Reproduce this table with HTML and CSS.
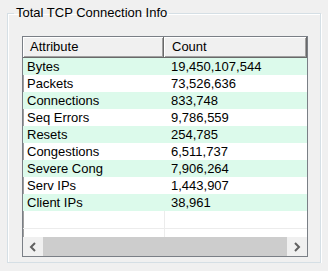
FILE: index.html
```html
<!DOCTYPE html>
<html>
<head>
<meta charset="utf-8">
<link rel="stylesheet" href="styles.css">
</head>
<body>
<fieldset class="group">
  <legend class="group-title">Total TCP Connection Info</legend>
  <div class="listview">
    <div class="lv-header">
      <div class="hcell col-a">Attribute</div>
      <div class="hcell col-b">Count</div>
    </div>
    <div class="lv-body">
      <div class="row alt"><div class="cell col-a">Bytes</div><div class="cell col-b">19,450,107,544</div></div>
      <div class="row"><div class="cell col-a">Packets</div><div class="cell col-b">73,526,636</div></div>
      <div class="row alt"><div class="cell col-a">Connections</div><div class="cell col-b">833,748</div></div>
      <div class="row"><div class="cell col-a">Seq Errors</div><div class="cell col-b">9,786,559</div></div>
      <div class="row alt"><div class="cell col-a">Resets</div><div class="cell col-b">254,785</div></div>
      <div class="row"><div class="cell col-a">Congestions</div><div class="cell col-b">6,511,737</div></div>
      <div class="row alt"><div class="cell col-a">Severe Cong</div><div class="cell col-b">7,906,264</div></div>
      <div class="row"><div class="cell col-a">Serv IPs</div><div class="cell col-b">1,443,907</div></div>
      <div class="row alt"><div class="cell col-a">Client IPs</div><div class="cell col-b">38,961</div></div>
      <div class="filler">
        <div class="filler-row"><div class="fcell col-a"></div><div class="fcell col-b"></div></div>
        <div class="filler-rest"><div class="fcell col-a"></div><div class="fcell col-b"></div></div>
      </div>
    </div>
    <div class="hscroll">
      <div class="sb-btn">
        <svg width="8" height="10" viewBox="0 0 8 10"><path d="M6 1 L2 5 L6 9" fill="none" stroke="#606060" stroke-width="2"/></svg>
      </div>
      <div class="sb-track"><div class="sb-thumb"></div></div>
      <div class="sb-btn">
        <svg width="8" height="10" viewBox="0 0 8 10"><path d="M2 1 L6 5 L2 9" fill="none" stroke="#606060" stroke-width="2"/></svg>
      </div>
    </div>
  </div>
</fieldset>
</body>
</html>
```
FILE: styles.css
```css
html, body {
  margin: 0;
  padding: 0;
  background: #f0f0f0;
}
body {
  padding: 5px 0 0 7px;
  font-family: "Liberation Sans", Arial, sans-serif;
  font-size: 13px;
  color: #000;
}
.group {
  box-sizing: border-box;
  width: 314px;
  height: 258px;
  margin: 0;
  padding: 15px 0 0 14px;
  border: 1px solid #d5dfe5;
  box-shadow: inset 1px 1px 0 #fff, 1px 1px 0 #fff;
  border-radius: 0;
}
.group-title {
  padding: 0 2px;
  margin-left: -8px;
  line-height: 16px;
  height: 16px;
}
.listview {
  box-sizing: border-box;
  width: 286px;
  height: 221px;
  border: 1px solid #7a7f86;
  box-shadow: inset 1px 0 0 #a0a0a0;
  background: #fff;
  display: flex;
  flex-direction: column;
}
.lv-header {
  display: flex;
  height: 21px;
  background: #f0f0f0;
  flex: none;
}
.hcell {
  box-sizing: border-box;
  height: 21px;
  line-height: 20px;
  padding-left: 7px;
  border-right: 1px solid #696969;
  border-bottom: 1px solid #696969;
  box-shadow: inset 1px 1px 0 #fff, inset -1px -1px 0 #a0a0a0;
}
.col-a {
  width: 141px;
  flex: none;
}
.col-b {
  width: 141px;
  flex: none;
}
.hcell.col-b {
  width: 143px;
  padding-left: 8px;
}
.lv-body {
  flex: 1;
  display: flex;
  flex-direction: column;
}
.row {
  display: flex;
  height: 17px;
  line-height: 18px;
  flex: none;
}
.row.alt {
  background: #dcfaeb;
}
.cell {
  padding-left: 4px;
  box-sizing: border-box;
  white-space: nowrap;
}
.cell.col-b {
  padding-left: 7px;
}
.filler {
  flex: 1;
  display: flex;
  flex-direction: column;
}
.filler-row {
  display: flex;
  height: 18px;
  border-bottom: 1px solid #ececec;
  box-sizing: border-box;
}
.filler-rest {
  display: flex;
  flex: 1;
}
.fcell.col-a {
  border-right: 1px solid #ececec;
}
.hscroll {
  display: flex;
  height: 19px;
  background: #f0f0f0;
  flex: none;
}
.sb-btn {
  width: 20px;
  display: flex;
  align-items: center;
  justify-content: center;
  flex: none;
}
.sb-track {
  flex: 1;
  display: flex;
}
.sb-thumb {
  flex: 1;
  background: #cdcdcd;
}
```
